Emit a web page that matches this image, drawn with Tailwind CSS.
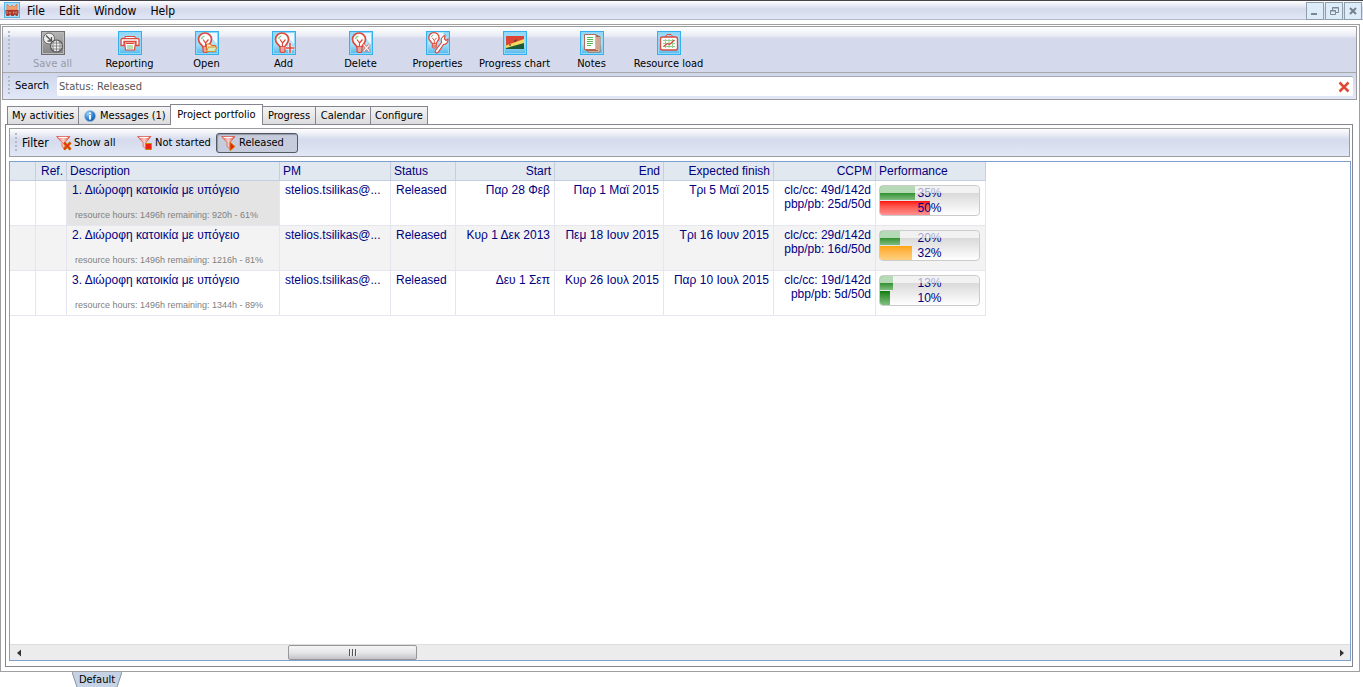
<!DOCTYPE html>
<html lang="en">
<head>
    <meta charset="UTF-8">
    <meta name="viewport" content="width=device-width, initial-scale=1.0">
    <title>Project portfolio</title>
    <script src="https://cdn.jsdelivr.net/npm/@tailwindcss/browser@4"></script>
</head>
<body class="h-screen overflow-hidden flex flex-col bg-white text-black text-[11px] leading-4 font-['DejaVu_Sans_Condensed','Noto_Sans',sans-serif]">

    <!-- Shared icon parts -->
    <svg class="absolute w-0 h-0" xmlns="http://www.w3.org/2000/svg">
        <defs>
            <linearGradient id="tile" x1="0" y1="0" x2="0" y2="1">
                <stop offset="0" stop-color="#8fd4f8"/>
                <stop offset="0.5" stop-color="#b5e4fa"/>
                <stop offset="1" stop-color="#4fb6ea"/>
            </linearGradient>
            <linearGradient id="grayTile" x1="0" y1="0" x2="0" y2="1">
                <stop offset="0" stop-color="#b5b5b5"/>
                <stop offset="1" stop-color="#858585"/>
            </linearGradient>
            <linearGradient id="cone" x1="0" y1="0" x2="1" y2="0">
                <stop offset="0" stop-color="#e8533f"/>
                <stop offset="0.5" stop-color="#fbd0c8"/>
                <stop offset="1" stop-color="#e0402c"/>
            </linearGradient>
            <radialGradient id="ball" cx="0.35" cy="0.3" r="0.8">
                <stop offset="0" stop-color="#9fd2f7"/>
                <stop offset="0.6" stop-color="#2b7fd0"/>
                <stop offset="1" stop-color="#15529c"/>
            </radialGradient>
        </defs>
        <symbol id="frame" viewBox="0 0 24 24">
            <rect x="0.5" y="0.5" width="23" height="23" fill="url(#tile)" stroke="#35b0ec"/>
            <rect x="1.5" y="1.5" width="21" height="21" fill="none" stroke="#8ed8fa"/>
        </symbol>
        <symbol id="bulb" viewBox="0 0 24 24">
            <path d="M12 2h10v11z" fill="#fff" opacity="0.8"/>
            <path d="M8 16c0-2-4.500-3-4.500-7.500a6.500 6.500 0 0 1 13 0c0 4-3.500 5-3.500 7.500z" fill="#fff" stroke="#dc4a3c" stroke-width="1.700"/>
            <path d="M8 16h5v4l-1 1.500H9L8 20zM8 18h5M8 20h5M10.500 16v-4L8 8.500M10.500 12l3-3.500" fill="#fff" stroke="#dc4a3c" stroke-width="1.200"/>
            <path d="M6.500 8a4 4 0 0 1 3-3" fill="none" stroke="#7cc47c" stroke-width="1.200"/>
        </symbol>
        <symbol id="funnel" viewBox="0 0 16 16">
            <path d="M0.500 1.500h13.500L9 7.500v6.500l-3-2.500v-4z" fill="url(#cone)" stroke="#d9534a" stroke-width="0.700"/>
            <path d="M2.500 2.500h9" stroke="#fff" stroke-width="1"/>
        </symbol>
    </svg>

    <!-- Menu bar -->
    <header class="h-5 shrink-0 flex items-center border-t border-t-[#45424a] border-b border-b-[#b5bacb] bg-linear-to-b from-white via-[#d5daec] via-45% to-[#e2e8f6]">
        <svg class="ml-1 w-4 h-4" viewBox="0 0 16 16">
            <rect x="0.500" y="0.500" width="15" height="15" fill="#a5dcf7" stroke="#58b5e6"/>
            <path d="M3 8V2l3 3 2-2 2 2 3-3v6z" fill="#f0a070" stroke="#e27a45" stroke-width="0.700"/>
            <path d="M1.500 8h13v3l-1 3H12l-1-1.500L9.500 14h-2L6 12.500 5 14H2.500l-1-3z" fill="#a8362a"/>
            <path d="M3 9v3M5 10l1 1.500L7 10M9.500 9.500v2M11 9.500l2 2M13 9.500l-2 2" stroke="#f2b0a0" stroke-width="0.700" fill="none"/>
        </svg>
        <nav class="flex flex-1 pt-px pl-[7px] gap-[14px] text-[12px]">
            <button>File</button>
            <button>Edit</button>
            <button>Window</button>
            <button>Help</button>
        </nav>
        <div class="flex gap-px pr-px pt-px">
            <button aria-label="Minimize" class="w-[18px] h-[18px] border border-[#8f9dad] bg-[#dcecf9]">
                <svg class="w-4 h-4" viewBox="0 0 16 16"><path d="M4 10h6v2H4z" fill="#7b8794"/></svg>
            </button>
            <button aria-label="Restore" class="w-[18px] h-[18px] border border-[#8f9dad] bg-[#dcecf9]">
                <svg class="w-4 h-4" viewBox="0 0 16 16" fill="none" stroke="#7b8794"><path d="M6.500 7V4.500h6v5H10M6 5h7M4.500 7.500h5v4h-5zM4 8h6"/></svg>
            </button>
            <button aria-label="Close" class="w-[18px] h-[18px] border border-[#8f9dad] bg-[#dcecf9]">
                <svg class="w-4 h-4" viewBox="0 0 16 16"><path d="M5 5l6 6M11 5l-6 6" stroke="#74808d" stroke-width="2"/></svg>
            </button>
        </div>
    </header>

    <!-- Main window frame -->
    <main class="flex-1 min-h-0 mt-1 mr-[3px] flex flex-col border border-[#a0a0a0] pl-1 pr-1 pt-px pb-1">
        <div class="-ml-[3px] -mr-[2px] shrink-0 border border-[#9c9ca0] bg-[#d4d9ec]">
            <!-- Toolbar -->
            <div class="h-[46px] flex items-start border-b border-[#a8a8a8] bg-linear-to-b from-white via-[#e9ecf4] via-20% to-[#d4d9ec] to-25%">
                <div class="mt-1 ml-[5px] h-9 w-[2px] bg-[repeating-linear-gradient(to_bottom,#b4b9ca_0_2px,transparent_2px_4px)]"></div>
                <div class="flex pl-1 pt-1">
                    <button disabled class="w-[77px] flex flex-col items-center text-[#9a9ba3]">
                        <svg class="w-6 h-6" viewBox="0 0 24 24">
                            <rect x="0.500" y="0.500" width="23" height="23" fill="url(#grayTile)" stroke="#6f6f6f"/>
                            <rect x="1.500" y="1.500" width="21" height="21" fill="none" stroke="#b8b8b8"/>
                            <circle cx="8" cy="7.500" r="5.500" fill="#eee" stroke="#666"/>
                            <path d="M5 4.500l5 5M10.500 6v4h-4" fill="none" stroke="#555" stroke-width="1.300"/>
                            <circle cx="15.500" cy="15" r="6" fill="#eee" stroke="#555" stroke-width="1.200"/>
                            <path d="M9.500 15h12M11 12h9.500M11 18h9.500M15.500 9v12M13 10c-1.500 3-1.500 7 0 10.500M18 10c1.500 3 1.500 7 0 10.500" fill="none" stroke="#777" stroke-width="0.800"/>
                        </svg>
                        <span class="mt-px">Save all</span>
                    </button>
                    <button class="w-[77px] flex flex-col items-center">
                        <svg class="w-6 h-6" viewBox="0 0 24 24">
                            <use href="#frame"/>
                            <path d="M4 7.500h16l1 1v6h-3v-4H6v4H3v-6z" fill="#fff" stroke="#dc4a3c" stroke-width="1.300"/>
                            <path d="M7 5.500h10v2H7z" fill="#fff" stroke="#dc4a3c"/>
                            <path d="M6.500 11h11l-1 8h-9z" fill="#fff" stroke="#dc4a3c" stroke-width="1.200"/>
                            <path d="M8 12.500h8" stroke="#dc4a3c"/>
                            <path d="M9 15h6M9 17h6" stroke="#6fc46f"/>
                        </svg>
                        <span class="mt-px">Reporting</span>
                    </button>
                    <button class="w-[77px] flex flex-col items-center">
                        <svg class="w-6 h-6" viewBox="0 0 24 24">
                            <use href="#frame"/><use href="#bulb"/>
                            <path d="M11.500 19.500v-6.500h4l1 1.500h4V17" fill="#ffe9b0" stroke="#e0622c"/>
                            <path d="M11.500 20.500l2-4.500H22l-2 4.500z" fill="#cfeec0" stroke="#e08a2c"/>
                        </svg>
                        <span class="mt-px">Open</span>
                    </button>
                    <button class="w-[77px] flex flex-col items-center">
                        <svg class="w-6 h-6" viewBox="0 0 24 24">
                            <use href="#frame"/><use href="#bulb"/>
                            <path d="M18 12v10M13.500 17h9" stroke="#fff" stroke-width="3"/>
                            <path d="M18 12v10M13.500 17h9" stroke="#dc4a3c" stroke-width="1.600"/>
                        </svg>
                        <span class="mt-px">Add</span>
                    </button>
                    <button class="w-[77px] flex flex-col items-center">
                        <svg class="w-6 h-6" viewBox="0 0 24 24">
                            <use href="#frame"/><use href="#bulb"/>
                            <path d="M14.500 13.500l6 7M20.500 13.500l-6 7" stroke="#dc4a3c" stroke-width="2.600"/>
                            <path d="M14.500 13.500l6 7M20.500 13.500l-6 7" stroke="#fff" stroke-width="1.200"/>
                        </svg>
                        <span class="mt-px">Delete</span>
                    </button>
                    <button class="w-[77px] flex flex-col items-center">
                        <svg class="w-6 h-6" viewBox="0 0 24 24">
                            <use href="#frame"/>
                            <use href="#bulb" x="0" y="0" width="19" height="19"/>
                            <path d="M9.500 19.500l6-8c-1-3 .5-6 3.500-7l-.5 3.500 1.500 1.500 2-1.500c.5 3-1.500 5.500-4.500 5.500l-5.500 8c-1.500 1-3.500-.5-2.500-2z" fill="#fff" stroke="#dc4a3c" stroke-width="1.200"/>
                        </svg>
                        <span class="mt-px">Properties</span>
                    </button>
                    <button class="w-[77px] flex flex-col items-center">
                        <svg class="w-6 h-6" viewBox="0 0 24 24">
                            <use href="#frame"/>
                            <path d="M3 5h18v13H3z" fill="#1c5a38"/>
                            <path d="M3 5h18v5L3 15z" fill="#dd4433"/>
                            <path d="M3 14.500L21 8v4L3 17z" fill="#f3d95c"/>
                            <path d="M6 14h2M11 10h2M13 9h1" stroke="#333"/>
                        </svg>
                        <span class="mt-px">Progress chart</span>
                    </button>
                    <button class="w-[77px] flex flex-col items-center">
                        <svg class="w-6 h-6" viewBox="0 0 24 24">
                            <use href="#frame"/>
                            <path d="M8 5.500h12v15.500H8zM6 4.500h12v15H6z" fill="#f6e7d8" stroke="#a5684e"/>
                            <path d="M4.500 3.500h11.500v15H4.500z" fill="#fff" stroke="#b56a55"/>
                            <path d="M7 6.500h6M7 8.500h6M7 10.500h6M7 12.500h6M7 14.500h4" stroke="#55b855"/>
                        </svg>
                        <span class="mt-px">Notes</span>
                    </button>
                    <button class="w-[77px] flex flex-col items-center">
                        <svg class="w-6 h-6" viewBox="0 0 24 24">
                            <use href="#frame"/>
                            <path d="M8 6l2-2.500h4L16 6" fill="none" stroke="#dc4a3c"/>
                            <rect x="3.500" y="6" width="17" height="13" rx="2" fill="#fff" stroke="#dc4a3c" stroke-width="1.400"/>
                            <path d="M6 9.500h12M6 12.500h12M6 15.500h12M8.500 8v9M12 8v9M15.500 8v9" stroke="#8fd08f"/>
                            <path d="M6.500 15.500l4-3 2 1 5-4.500" fill="none" stroke="#dc4a3c" stroke-width="1.200"/>
                        </svg>
                        <span class="mt-px">Resource load</span>
                    </button>
                </div>
            </div>
            <!-- Search -->
            <div class="h-[26px] flex items-center bg-linear-to-b from-[#d0d7ec] to-[#e2e8f6] pr-[3px]">
                <div class="ml-[5px] h-5 w-[2px] bg-[repeating-linear-gradient(to_bottom,#b4b9ca_0_2px,transparent_2px_4px)]"></div>
                <label for="search" class="pl-[5px] w-[47px]">Search</label>
                <div class="flex-1 h-5 flex items-center bg-white border-t border-[#a3a6b0] rounded-[2px]">
                    <input id="search" type="text" value="Status: Released" class="flex-1 pl-[2px] text-[#555] outline-none">
                    <button aria-label="Clear" class="mr-[3px]">
                        <svg class="w-3 h-3" viewBox="0 0 12 12"><path d="M1.500 1.500l9 9M10.500 1.500l-9 9" stroke="#df4a36" stroke-width="2.500"/></svg>
                    </button>
                </div>
            </div>
        </div>

        <!-- Tabs -->
        <nav class="relative z-10 shrink-0 mt-1 pl-[2px] h-[21px] -mb-px flex items-end">
            <button class="w-[72px] h-[18px] -mr-px mb-px border border-b-0 border-[#85858f] bg-linear-to-b from-[#f4f4f4] to-[#dcdcdf]">My activities</button>
            <button class="w-[93px] h-[18px] mb-px flex items-center gap-1 pl-[5px] border border-b-0 border-[#85858f] bg-linear-to-b from-[#f4f4f4] to-[#dcdcdf]">
                <svg class="w-3 h-3" viewBox="0 0 12 12">
                    <circle cx="6" cy="6" r="5.500" fill="url(#ball)" stroke="#9bbfe0" stroke-width="0.500"/>
                    <path d="M5 2.500h2v1.500H5zM5 5h2v4.500H5z" fill="#fff"/>
                </svg>
                <span class="whitespace-nowrap">Messages (1)</span>
            </button>
            <button class="w-[93px] h-[21px] -ml-px border border-b-0 border-[#85858f] bg-white pb-px">Project portfolio</button>
            <button class="w-[54px] h-[18px] -ml-px mb-px border border-b-0 border-[#85858f] bg-linear-to-b from-[#f4f4f4] to-[#dcdcdf]">Progress</button>
            <button class="w-14 h-[18px] -ml-px mb-px border border-b-0 border-[#85858f] bg-linear-to-b from-[#f4f4f4] to-[#dcdcdf]">Calendar</button>
            <button class="w-[58px] h-[18px] -ml-px mb-px border border-b-0 border-[#85858f] bg-linear-to-b from-[#f4f4f4] to-[#dcdcdf]">Configure</button>
        </nav>

        <section class="flex-1 min-h-0 mr-[2px] flex flex-col border border-[#85858f] pl-[3px] pt-[3px] pb-[5px] pr-px">
            <!-- Filter bar -->
            <div class="shrink-0 h-[29px] mr-px flex items-center border border-[#9c9ca0] bg-linear-to-b from-white via-[#d5daec] via-40% to-[#e2e8f6]">
                <div class="ml-[5px] h-5 w-[2px] bg-[repeating-linear-gradient(to_bottom,#b4b9ca_0_2px,transparent_2px_4px)]"></div>
                <span class="w-[39px] pl-[5px] text-[12px]">Filter</span>
                <button class="w-[81px] flex items-center gap-[2px]">
                    <svg class="w-4 h-4" viewBox="0 0 16 16"><use href="#funnel"/><path d="M8 7.500l6.500 7M14.500 7.500l-6.500 7" stroke="#b89000" stroke-width="3"/><path d="M8 7.500l6.500 7M14.500 7.500l-6.500 7" stroke="#f02a10" stroke-width="1.500"/></svg>
                    <span>Show all</span>
                </button>
                <button class="w-[79px] flex items-center gap-[2px]">
                    <svg class="w-4 h-4 shrink-0" viewBox="0 0 16 16"><use href="#funnel"/><path d="M8.500 8.500h6v6h-6z" fill="#f02010" stroke="#c09000"/></svg>
                    <span class="whitespace-nowrap">Not started</span>
                </button>
                <button class="w-[82px] h-5 pl-1 flex items-center gap-[2px] rounded-[3px] border border-[#55585f] bg-[#c6ccdc] shadow-[inset_1px_1px_1px_#9097a8]">
                    <svg class="w-4 h-4" viewBox="0 0 16 16"><use href="#funnel"/><path d="M9 7l5 4.500L9 16z" fill="#f02010" stroke="#c09000" stroke-width="0.800"/></svg>
                    <span>Released</span>
                </button>
            </div>

            <!-- Project grid -->
            <div class="flex-1 min-h-0 mt-1 flex flex-col border border-[#7f9fce] bg-white">
                <div class="flex-1 min-h-0 overflow-hidden">
                    <table class="table-fixed w-[976px] border-separate border-spacing-0 text-[12px] leading-[14px] text-[#00007f] font-['Liberation_Sans',sans-serif]">
                        <colgroup>
                            <col class="w-[26px]"><col class="w-[31px]"><col class="w-[213px]"><col class="w-[111px]"><col class="w-[65px]">
                            <col class="w-[99px]"><col class="w-[109px]"><col class="w-[110px]"><col class="w-[102px]"><col class="w-[110px]">
                        </colgroup>
                        <thead>
                            <tr class="h-[19px] bg-[#e1e8f0] text-left whitespace-nowrap *:font-normal *:border-r *:border-b *:border-[#c3cfe0] *:px-[3px]">
                                <th></th>
                                <th class="text-right">Ref.</th>
                                <th>Description</th>
                                <th>PM</th>
                                <th>Status</th>
                                <th class="text-right">Start</th>
                                <th class="text-right">End</th>
                                <th class="text-right">Expected finish</th>
                                <th class="text-right">CCPM</th>
                                <th>Performance</th>
                            </tr>
                        </thead>
                        <tbody id="projects"></tbody>
                    </table>
                </div>
                <!-- Horizontal scrollbar -->
                <div class="shrink-0 h-4 flex items-center border-t border-[#dedede] bg-[#ececec]">
                    <button aria-label="Scroll left" class="w-[17px] flex justify-center"><svg class="w-2 h-2" viewBox="0 0 8 8"><path d="M6 0.500v7L2 4z" fill="#333"/></svg></button>
                    <div class="flex-1 h-full flex">
                        <div class="w-[20%]"></div>
                        <div class="w-[129px] h-[15px] flex justify-center items-center gap-px rounded-[2px] border border-[#979797] bg-linear-to-b from-[#f5f5f5] via-[#e6e6e8] via-50% to-[#c4c4c8]">
                            <i class="w-[2px] h-[7px] border-l border-[#555] bg-[#eee]"></i>
                            <i class="w-[2px] h-[7px] border-l border-[#555] bg-[#eee]"></i>
                            <i class="w-[2px] h-[7px] border-l border-[#555] bg-[#eee]"></i>
                        </div>
                    </div>
                    <button aria-label="Scroll right" class="w-[17px] flex justify-center"><svg class="w-2 h-2" viewBox="0 0 8 8"><path d="M2 0.500v7l4-3.500z" fill="#333"/></svg></button>
                </div>
            </div>
        </section>
    </main>

    <!-- Workspace tab -->
    <footer class="h-[15px] shrink-0 pl-[72px]">
        <button class="relative w-[50px] h-[15px] flex justify-center">
            <svg class="absolute inset-0 w-full h-full" viewBox="0 0 50 15" preserveAspectRatio="none"><path d="M0 0h50l-5 15H5z" fill="#c5d3e4"/><path d="M0 0l5 15M50 0l-5 15" stroke="#8a93a0" fill="none"/></svg>
            <span class="relative">Default</span>
        </button>
    </footer>

    <script>
        const projects = [
            { name: '1. Διώροφη κατοικία με υπόγειο', hours: 'resource hours: 1496h remaining: 920h - 61%', start: 'Παρ 28 Φεβ', end: 'Παρ 1 Μαϊ 2015', finish: 'Τρι 5 Μαϊ 2015', chain: 'clc/cc: 49d/142d', buffer: 'pbp/pb: 25d/50d', done: 35, used: 50, color: 'from-[#ff0000] to-[#ff9090]' },
            { name: '2. Διώροφη κατοικία με υπόγειο', hours: 'resource hours: 1496h remaining: 1216h - 81%', start: 'Κυρ 1 Δεκ 2013', end: 'Πεμ 18 Ιουν 2015', finish: 'Τρι 16 Ιουν 2015', chain: 'clc/cc: 29d/142d', buffer: 'pbp/pb: 16d/50d', done: 20, used: 32, color: 'from-[#ffa500] to-[#ffd080]' },
            { name: '3. Διώροφη κατοικία με υπόγειο', hours: 'resource hours: 1496h remaining: 1344h - 89%', start: 'Δευ 1 Σεπ', end: 'Κυρ 26 Ιουλ 2015', finish: 'Παρ 10 Ιουλ 2015', chain: 'clc/cc: 19d/142d', buffer: 'pbp/pb: 5d/50d', done: 13, used: 10, color: 'from-[#007f00] to-[#80c080]' }
        ];

        document.getElementById('projects').innerHTML = projects.map((p, i) => `
            <tr class="h-[45px] align-top whitespace-nowrap even:bg-[#f3f3f3] *:border-r *:border-b *:border-[#e6e6ee] *:pt-[2px]">
                <td></td>
                <td></td>
                <td class="pl-[5px] ${i === 0 ? 'bg-[#e4e4e4]' : ''}">
                    <div>${p.name}</div>
                    <div class="mt-[11px] pl-[3px] text-[9px] text-[#808080]">${p.hours}</div>
                </td>
                <td class="pl-[5px]">stelios.tsilikas@...</td>
                <td class="pl-[5px]">Released</td>
                <td class="pr-1 text-right">${p.start}</td>
                <td class="pr-1 text-right">${p.end}</td>
                <td class="pr-1 text-right">${p.finish}</td>
                <td class="pr-1 text-right">${p.chain}<br>${p.buffer}</td>
                <td class="pl-[3px]">
                    <div class="relative mt-[2px] w-[101px] h-[31px] overflow-hidden rounded-[4px] border border-[#cbcbcb] bg-linear-to-b from-[#dadada] from-25% to-white text-center">
                        <div class="relative h-[14px] mb-px">
                            <div class="absolute inset-y-0 left-0 bg-linear-to-b from-[#2f912f] from-50% to-[#80bb80]" style="width: ${p.done}%"></div>
                            <span class="relative">${p.done}%</span>
                        </div>
                        <div class="relative h-[14px]">
                            <div class="absolute inset-y-0 left-0 bg-linear-to-b ${p.color}" style="width: ${p.used}%"></div>
                            <span class="relative">${p.used}%</span>
                        </div>
                        <div class="absolute inset-x-0 top-0 h-[7px] bg-white/65"></div>
                    </div>
                </td>
            </tr>`).join('');
    </script>
</body>
</html>
